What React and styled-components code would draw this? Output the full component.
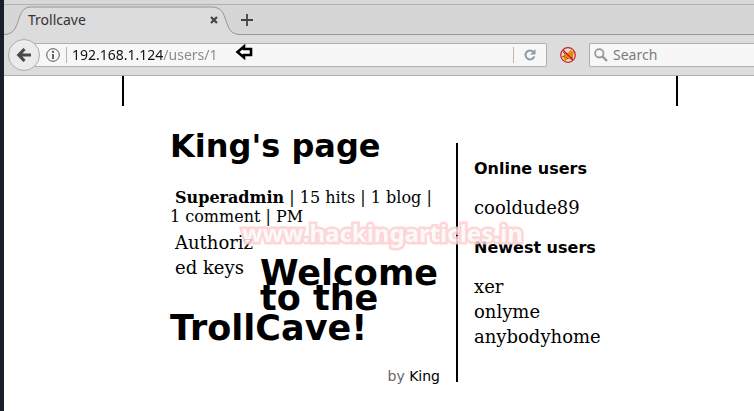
import React from "react";
import styled, { createGlobalStyle } from "styled-components";

const GlobalStyle = createGlobalStyle`
	* {
		box-sizing: border-box;
	}
	body {
		margin: 0;
		background: #fff;
		color: #000;
	}
	a {
		color: inherit;
		text-decoration: none;
	}
`;

const ui = `"Noto Sans", "Open Sans", sans-serif`;
const sans = `"DejaVu Sans", sans-serif`;
const serif = `"DejaVu Serif", serif`;

const Window = styled.div`
	min-height: 100vh;
	border-left: 4px solid #1a1e29;
	overflow: hidden;
`;

const TitleStrip = styled.div`
	height: 5px;
	background: #d8d8d8;
	border-bottom: 1px solid #b0b0b0;
`;

const TabBar = styled.div`
	display: flex;
	height: 30px;
	background: #d6d6d6;
	border-bottom: 1px solid #989898;
`;

const Tab = styled.div`
	position: relative;
	display: flex;
	align-items: center;
	justify-content: space-between;
	width: 236px;
	height: 30px;
	padding: 0 19px 0 24px;
	font: 14px/20px ${ui};
	color: #333;
`;

const TabShape = styled.svg`
	position: absolute;
	top: 0;
	left: 0;
`;

const TabTitle = styled.span`
	position: relative;
`;

const PlainButton = styled.button`
	position: relative;
	display: flex;
	align-items: center;
	justify-content: center;
	width: ${(props) => props.$width || 14}px;
	padding: 0;
	border: 0;
	background: none;
`;

const Toolbar = styled.div`
	display: flex;
	align-items: center;
	height: 41px;
	padding-left: 4px;
	background: #dcdcdc;
	border-bottom: 1px solid #b0b0b0;
`;

const BackButton = styled.button`
	position: relative;
	z-index: 1;
	display: flex;
	align-items: center;
	justify-content: center;
	flex: none;
	width: 32px;
	height: 32px;
	padding: 0;
	border: 1px solid #adadad;
	border-radius: 50%;
	background: #ebebeb;
`;

const Field = styled.div`
	display: flex;
	align-items: center;
	height: 24px;
	border: 1px solid #b0b0b0;
	border-radius: 2px;
	background: #f7f7f7;
`;

const UrlBar = styled(Field)`
	flex: 1;
	min-width: 0;
	margin-left: -8px;
	padding: 0 5px 0 13px;
`;

const SearchBar = styled(Field)`
	width: 165px;
	padding-left: 4px;
	border-right: 0;
	border-radius: 2px 0 0 2px;
`;

const Divider = styled.span`
	width: 1px;
	height: 16px;
	margin: 0 5px 0 6px;
	background: ${(props) => props.$color || "#b4b4b4"};
`;

const Input = styled.input`
	flex: 1;
	min-width: 0;
	height: 20px;
	padding: 0;
	border: 0;
	outline: 0;
	background: none;
	font: 14px/20px ${ui};
	color: #222;
	&::placeholder {
		color: #7b7b7b;
		opacity: 1;
	}
`;

const SearchInput = styled(Input)`
	margin-left: 5px;
`;

/* host is dark, path is dimmed */
const UrlInput = styled(Input)`
	flex: 0 0 160px;
	color: transparent;
	background: linear-gradient(90deg, #111 91px, #888 91px);
	-webkit-background-clip: text;
	background-clip: text;
`;

const Spacer = styled.span`
	flex: 1;
`;

const Page = styled.div`
	position: relative;
	max-width: 556px;
	margin-left: 118px;
`;

const Banner = styled.header`
	height: 30px;
	border: 2px solid #000;
	border-width: 0 2px;
`;

const Columns = styled.div`
	display: flex;
	align-items: flex-start;
	padding: 0 48px;
`;

const Main = styled.main`
	width: 270px;
	padding-top: 22px;
`;

const Title = styled.h1`
	margin: 0;
	font: bold 32px/37px ${sans};
`;

const Stats = styled.p`
	margin: 23px 0 0;
	font: 16px/19px ${serif};
`;

const Rank = styled.b`
	margin-left: 5px;
`;

const Keys = styled.div`
	float: left;
	width: 90px;
	padding: 4px 5px 36px;
	font: 18px/25px ${serif};
	word-break: break-all;
`;

const Post = styled.h2`
	margin: 0;
	padding-top: 35px;
	font: bold 35px/25px ${sans};
`;

const Byline = styled.p`
	margin: 27px 0 0;
	font: 14px/16px ${sans};
	text-align: right;
	color: #666;
	a {
		color: #000;
	}
`;

const Sidebar = styled.aside`
	min-height: 239px;
	margin: 37px 0 0 16px;
	padding: 16px 0 0 16px;
	border-left: 2px solid #000;
`;

const SideTitle = styled.h3`
	margin: 0;
	font: bold 16px/19px ${sans};
`;

const UserList = styled.ul`
	margin: 17px 0 18px;
	padding: 0;
	list-style: none;
	font: 18px/25px ${serif};
`;

const Watermark = styled.div`
	position: absolute;
	top: 140px;
	left: 120px;
	font: bold 24px/34px ${ui};
	color: #fafafa;
	-webkit-text-stroke: 5px #ffcfcf;
	paint-order: stroke fill;
	opacity: 0.85;
	pointer-events: none;
`;

const Marker = styled.svg`
	margin: 0 0 6px 3px;
`;

const newest = ["xer", "onlyme", "anybodyhome"];

const Users = ({ title, names }) => (
	<section>
		<SideTitle>{title}</SideTitle>
		<UserList>
			{names.map((name) => (
				<li key={name}>
					<a href={"#" + name}>{name}</a>
				</li>
			))}
		</UserList>
	</section>
);

const Browser = () => (
	<>
		<TitleStrip />
		<TabBar>
			<Tab>
				<TabShape width="236" height="30">
					<path
						d="M0 29.5C19 29.5 10 2 27 2H208C227 2 217 29.5 236 29.5V30H0Z"
						fill="#dcdcdc"
					/>
					<path
						d="M0 29.5C19 29.5 10 2 27 2H208C227 2 217 29.5 236 29.5"
						fill="none"
						stroke="#8f979e"
					/>
				</TabShape>
				<TabTitle>Trollcave</TabTitle>
				<PlainButton aria-label="Close tab">
					<svg width="8" height="8" viewBox="0 0 8 8">
						<path d="M1 1L7 7M7 1L1 7" stroke="#444" strokeWidth="2.2" />
					</svg>
				</PlainButton>
			</Tab>
			<PlainButton aria-label="New tab">
				<svg width="12" height="12" viewBox="0 0 12 12">
					<path d="M6 0V12M0 6H12" stroke="#444" strokeWidth="1.8" />
				</svg>
			</PlainButton>
		</TabBar>
		<Toolbar>
			<BackButton aria-label="Back">
				<svg width="16" height="16" viewBox="0 0 16 16">
					<path
						d="M8.5 2L2.8 8L8.5 14M3 8H15"
						fill="none"
						stroke="#4a4a4a"
						strokeWidth="3.2"
					/>
				</svg>
			</BackButton>
			<UrlBar>
				<svg width="14" height="14" viewBox="0 0 14 14">
					<circle cx="7" cy="7" r="6.3" fill="none" stroke="#555" />
					<path d="M7 6V11" stroke="#555" strokeWidth="1.8" />
					<circle cx="7" cy="3.9" r="1.1" fill="#555" />
				</svg>
				<Divider />
				<UrlInput aria-label="Address" defaultValue="192.168.1.124/users/1" />
				<Marker width="18" height="16" viewBox="0 0 18 16">
					<path
						d="M2.5 8L9 2.5V5H16V11H9V13.5Z"
						fill="#fff"
						stroke="#000"
						strokeWidth="2.6"
					/>
				</Marker>
				<Spacer />
				<Divider $color="#cbaeb0" />
				<PlainButton $width={22} aria-label="Reload">
					<svg width="12" height="12" viewBox="0 0 12 12">
						<path
							d="M9.3 2.8A4.5 4.5 0 1 0 10.3 7.4"
							fill="none"
							stroke="#8c9cac"
							strokeWidth="2"
						/>
						<path d="M11.5 0V5.5H6Z" fill="#8c9cac" />
					</svg>
				</PlainButton>
			</UrlBar>
			<PlainButton $width={42} aria-label="Script blocker">
				<svg width="16" height="16" viewBox="0 0 16 16">
					<circle cx="8" cy="8" r="7" fill="#e4dede" />
					<path
						d="M3 9L5 6L8 6L10 3L12 4L14 5L13 9L12 13L8 12L5 14L4 12Z"
						fill="#e58a0c"
					/>
					<path
						d="M3 5L5 7M2 10L5 9M13 11L11 10M6 10L8 12"
						stroke="#8a5a28"
					/>
					<circle cx="8" cy="8" r="7.3" fill="none" stroke="#d21c1c" strokeWidth="1.2" />
					<path d="M3 3L13 13" stroke="#d21c1c" strokeWidth="1.4" />
				</svg>
			</PlainButton>
			<SearchBar>
				<svg width="14" height="14" viewBox="0 0 14 14">
					<circle cx="5.3" cy="5.3" r="4.2" fill="none" stroke="#999" strokeWidth="1.8" />
					<path d="M8.4 8.4L13 13" stroke="#999" strokeWidth="2.4" />
				</svg>
				<SearchInput aria-label="Search" placeholder="Search" />
			</SearchBar>
		</Toolbar>
	</>
);

const App = () => {
	return (
		<Window>
			<GlobalStyle />
			<Browser />
			<Page>
				<Banner />
				<Columns>
					<Main>
						<Title>King's page</Title>
						<Stats>
							<Rank>Superadmin</Rank> | 15 hits | 1 blog | 1 comment |{" "}
							<a href="#pm">PM</a>
						</Stats>
						<Keys>
							<a href="#keys">Authorized keys</a>
						</Keys>
						<Post>Welcome to the TrollCave!</Post>
						<Byline>
							by <a href="#king">King</a>
						</Byline>
					</Main>
					<Sidebar>
						<Users title="Online users" names={["cooldude89"]} />
						<Users title="Newest users" names={newest} />
					</Sidebar>
				</Columns>
				<Watermark>www.hackingarticles.in</Watermark>
			</Page>
		</Window>
	);
};

export default App;
